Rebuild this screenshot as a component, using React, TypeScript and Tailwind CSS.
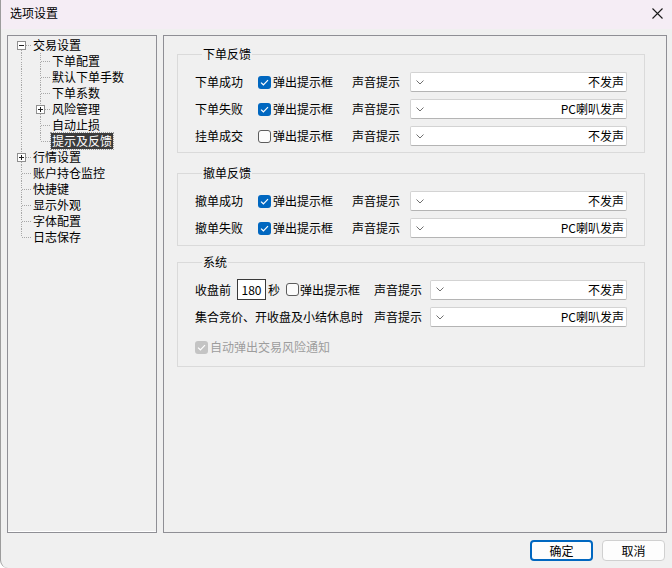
import React from 'react';

type CellKind = 'vert' | 'tee' | 'corner' | 'plusTee' | 'minusFirst';

const tree: { label: string; cells: CellKind[]; selected?: boolean }[] = [
  { label: '交易设置', cells: ['minusFirst'] },
  { label: '下单配置', cells: ['vert', 'tee'] },
  { label: '默认下单手数', cells: ['vert', 'tee'] },
  { label: '下单系数', cells: ['vert', 'tee'] },
  { label: '风险管理', cells: ['vert', 'plusTee'] },
  { label: '自动止损', cells: ['vert', 'tee'] },
  { label: '提示及反馈', cells: ['vert', 'corner'], selected: true },
  { label: '行情设置', cells: ['plusTee'] },
  { label: '账户持仓监控', cells: ['tee'] },
  { label: '快捷键', cells: ['tee'] },
  { label: '显示外观', cells: ['tee'] },
  { label: '字体配置', cells: ['tee'] },
  { label: '日志保存', cells: ['corner'] },
];

const TreeCell = ({ kind }: { kind: CellKind }) => {
  const up = kind !== 'minusFirst';
  const down = kind !== 'corner';
  const right = kind !== 'vert';
  const box = kind === 'minusFirst' ? '-' : kind === 'plusTee' ? '+' : null;
  const dot = { stroke: '#a8a8a8', strokeWidth: 1, strokeDasharray: '1 1' };
  return (
    <svg width="19" height="16" className="shrink-0 block">
      {up && <line x1="9.5" y1="0" x2="9.5" y2={box ? 4 : 8} {...dot} />}
      {down && <line x1="9.5" y1={box ? 13 : 9} x2="9.5" y2="16" {...dot} />}
      {right && <line x1={box ? 14 : 10} y1="8.5" x2="19" y2="8.5" {...dot} />}
      {box && (
        <>
          <rect x="5.5" y="4.5" width="8" height="8" fill="#fff" stroke="#8f8f8f" />
          <line x1="7" y1="8.5" x2="12" y2="8.5" stroke="#202020" />
          {box === '+' && <line x1="9.5" y1="6" x2="9.5" y2="11" stroke="#202020" />}
        </>
      )}
    </svg>
  );
};

const Check = ({ checked, disabled }: { checked?: boolean; disabled?: boolean }) => {
  if (checked) {
    return (
      <span
        className={`w-[13px] h-[13px] rounded-[3px] shrink-0 flex items-center justify-center ${
          disabled ? 'bg-[#c4c4c4]' : 'bg-[#0067c0]'
        }`}
      >
        <svg width="9" height="7" viewBox="0 0 9 7">
          <path d="M1 3.6 L3.4 5.8 L8 1.2" fill="none" stroke="#fff" strokeWidth="1.2" />
        </svg>
      </span>
    );
  }
  return <span className="w-[13px] h-[13px] rounded-[3px] shrink-0 border border-[#5c5c5c] bg-[#fbfbfb]" />;
};

const Dropdown = ({ value }: { value: string }) => (
  <div className="flex-1 h-[20px] bg-white border border-[#d3d3d3] border-b-[#b4b4b4] rounded-[2px] flex items-center pl-[5px] pr-[2px]">
    <svg width="8" height="5" viewBox="0 0 8 5" className="shrink-0">
      <path d="M0.5 0.5 L4 4 L7.5 0.5" fill="none" stroke="#707070" strokeWidth="1" />
    </svg>
    <span className="ml-auto">{value}</span>
  </div>
);

const Group = ({
  title,
  className,
  children,
}: {
  title: string;
  className?: string;
  children: React.ReactNode;
}) => (
  <fieldset className={`border border-[#dadada] ml-[13px] mr-[21px] px-[17px] ${className ?? ''}`}>
    <legend className="ml-[7px] px-[1px] leading-4">{title}</legend>
    {children}
  </fieldset>
);

const FeedbackRow = ({
  label,
  checked,
  sound,
}: {
  label: string;
  checked?: boolean;
  sound: string;
}) => (
  <div className="flex items-center h-[20px]">
    <span className="w-[63px] shrink-0">{label}</span>
    <span className="w-[94px] shrink-0 flex items-center gap-[2px]">
      <Check checked={checked} />
      弹出提示框
    </span>
    <span className="w-[58px] shrink-0">声音提示</span>
    <Dropdown value={sound} />
  </div>
);

export default function App() {
  return (
    <div className="w-[672px] h-[568px] bg-[#f0f0f0] text-[12px] leading-4 text-black font-['Noto_Sans_CJK_SC',sans-serif] flex flex-col border-l border-[#9c9c9c] rounded-bl-[8px] overflow-hidden">
      <div className="h-[29px] shrink-0 bg-[#f5edf5] flex items-start justify-between pt-[5px] pl-[9px] pr-[9px]">
        <span>选项设置</span>
        <svg width="11" height="11" viewBox="0 0 11 11" className="mt-[3px]">
          <path d="M0.5 0.5 L10.5 10.5 M10.5 0.5 L0.5 10.5" stroke="#1a1a1a" strokeWidth="1.1" />
        </svg>
      </div>

      <div className="flex gap-[6px] pl-[6px] pt-[6px]">
        <div className="w-[150px] h-[498px] shrink-0 border border-[#8f8f95] shadow-[inset_0_-1px_0_#ffffff] pt-[1px] pl-[4px]">
          {tree.map((item) => (
            <div key={item.label} className="flex items-center h-4">
              {item.cells.map((c, i) => (
                <TreeCell key={i} kind={c} />
              ))}
              <span
                className={`ml-[1px] px-[1px] whitespace-nowrap ${
                  item.selected ? 'bg-[#3c3c3c] text-white outline outline-1 outline-dotted outline-[#9a9a9a]' : ''
                }`}
              >
                {item.label}
              </span>
            </div>
          ))}
        </div>

        <div className="w-[504px] h-[498px] shrink-0 border border-[#8f8f95] pt-[10px]">
          <Group title="下单反馈" className="pt-[10px] pb-[6px]">
            <div className="flex flex-col gap-[7px]">
              <FeedbackRow label="下单成功" checked sound="不发声" />
              <FeedbackRow label="下单失败" checked sound="PC喇叭发声" />
              <FeedbackRow label="挂单成交" sound="不发声" />
            </div>
          </Group>

          <Group title="撤单反馈" className="mt-[12px] pt-[10px] pb-[7px]">
            <div className="flex flex-col gap-[7px]">
              <FeedbackRow label="撤单成功" checked sound="不发声" />
              <FeedbackRow label="撤单失败" checked sound="PC喇叭发声" />
            </div>
          </Group>

          <Group title="系统" className="mt-[8px] pt-[9px] pb-[11px]">
            <div className="flex items-center h-[21px]">
              <span className="shrink-0">收盘前</span>
              <span className="ml-[6px] w-[29px] h-[21px] shrink-0 bg-white border border-[#3a3a3a] flex items-center justify-center">
                180
              </span>
              <span className="ml-[2px] shrink-0">秒</span>
              <span className="ml-[6px] w-[88px] shrink-0 flex items-center gap-[1px]">
                <Check />
                弹出提示框
              </span>
              <span className="w-[56px] shrink-0">声音提示</span>
              <Dropdown value="不发声" />
            </div>
            <div className="flex items-center h-[20px] mt-[7px]">
              <span className="w-[179px] shrink-0">集合竞价、开收盘及小结休息时</span>
              <span className="w-[56px] shrink-0">声音提示</span>
              <Dropdown value="PC喇叭发声" />
            </div>
            <div className="flex items-center h-4 mt-[12px] gap-[2px] text-[#9d9d9d]">
              <Check checked disabled />
              自动弹出交易风险通知
            </div>
          </Group>
        </div>
      </div>

      <div className="flex justify-end gap-[9px] pr-[7px] mt-[7px]">
        <button className="w-[63px] h-[21px] rounded-[4px] bg-[#fdfdfd] border-2 border-[#0067c0] flex items-center justify-center">
          确定
        </button>
        <button className="w-[63px] h-[21px] rounded-[4px] bg-[#fdfdfd] border border-[#d0d0d0] flex items-center justify-center">
          取消
        </button>
      </div>
    </div>
  );
}
